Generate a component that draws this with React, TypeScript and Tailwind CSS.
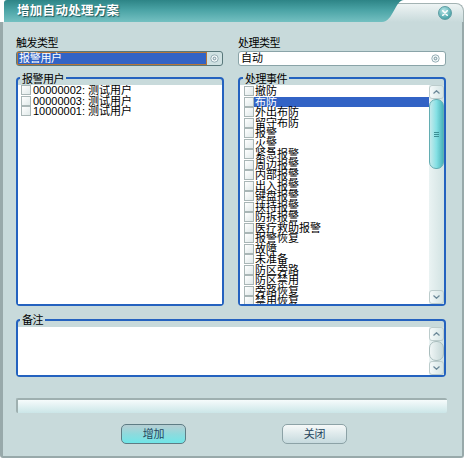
import React from "react";

const FONT = "font-['Liberation_Sans','Noto_Sans_CJK_SC',sans-serif]";

function Check() {
  return (
    <span className="block w-[10px] h-[10px] shrink-0 border border-[#a9b6b6] bg-gradient-to-br from-white to-[#e0e9e9]" />
  );
}

function Arrow({ up }: { up: boolean }) {
  return (
    <div className="h-[14px] shrink-0 flex items-center justify-center rounded-[3px] border border-[#bccccc] bg-gradient-to-r from-[#f5fafa] to-[#d4e4e4]">
      <svg width="7" height="4" viewBox="0 0 7 4">
        <path
          d={up ? "M0.5 3.5 L3.5 0.7 L6.5 3.5" : "M0.5 0.5 L3.5 3.3 L6.5 0.5"}
          fill="none"
          stroke="#6b8898"
          strokeWidth="1.2"
        />
      </svg>
    </div>
  );
}

function Spin() {
  return (
    <svg width="9" height="9" viewBox="0 0 9 9">
      <circle cx="4.5" cy="4.5" r="3.7" fill="#eef5f6" stroke="#8ea8b0" strokeWidth="0.9" />
      <circle cx="4.5" cy="4.5" r="1.3" fill="none" stroke="#5f7f8c" strokeWidth="0.8" />
    </svg>
  );
}

const users = ["00000002", "00000003", "10000001"];
const events = [
  "撤防",
  "布防",
  "外出布防",
  "留守布防",
  "报警",
  "火警",
  "紧急报警",
  "周边报警",
  "内部报警",
  "出入报警",
  "键盘报警",
  "挟持报警",
  "防拆报警",
  "医疗救助报警",
  "报警恢复",
  "故障",
  "未准备",
  "防区旁路",
  "防区禁用",
  "旁路恢复",
  "禁用恢复",
];

export default function App() {
  return (
    <div className={`w-[464px] h-[458px] bg-white flex flex-col ${FONT} text-[11px] text-black`}>
      {/* title bar */}
      <div className="h-[22px] flex shrink-0">
        <div className="w-[4px]" />
        <div className="flex-1 flex">
          <div className="relative z-[1] w-[400px] h-full flex items-center pl-[13px] rounded-tl-[3px] bg-[linear-gradient(to_bottom,#2d8486,#4aa3a5_45%,#74c0c1)] [clip-path:path('M0_0_H400_C391_0_389_22_378_22_H0_Z')]">
            <span className="text-white font-bold text-[12.5px] leading-none tracking-[0.3px] [text-shadow:1px_1px_1px_#1b5557]">
              增加自动处理方案
            </span>
          </div>
          <div className="flex-1 ml-[-26px] mt-[3px] flex items-center justify-end pr-[11px] rounded-tr-[8px] border-t border-r border-[#a3b3b3] bg-gradient-to-b from-[#eef4f4] to-[#c8dadb]">
            <div className="w-[14px] h-[14px] rounded-full border border-[#5c9ca2] bg-[radial-gradient(circle_at_40%_30%,#b8e6e8,#4aa4a9_75%)] flex items-center justify-center">
              <svg width="6" height="6" viewBox="0 0 6 6">
                <path d="M0.8 0.8 L5.2 5.2 M5.2 0.8 L0.8 5.2" stroke="#ffffff" strokeWidth="1.6" strokeLinecap="round" />
              </svg>
            </div>
          </div>
        </div>
      </div>

      {/* body */}
      <div className="flex-1 flex flex-col bg-[#c8dadb] border-l-[3px] border-r-[2px] border-b-[2px] border-[#98a9aa] rounded-b-[3px] pl-[13px] pr-[16px] pt-[14px]">
        <div className="flex gap-[14px]">
          {/* left column */}
          <div className="w-[208px] flex flex-col">
            <div className="h-[14px] leading-[14px] tracking-[-0.5px]">触发类型</div>
            <div className="mt-[1px] h-[15px] w-[207px] flex items-stretch border border-[#58777a] rounded-[3px] bg-[#cfe1e2]">
              <div className="flex-1 bg-[#3263c5] border border-[#b5763a] text-white leading-[11px] pl-[1px] tracking-[-0.3px]">
                报警用户
              </div>
              <div className="w-[15px] flex items-center justify-center">
                <Spin />
              </div>
            </div>
            <div className="relative mt-[11px] h-[229px] border-2 border-[#2462bf] rounded-[4px] pt-[6px] flex flex-col">
              <span className="absolute top-[-6px] left-[2px] px-[2px] h-[12px] leading-[12px] bg-[#c8dadb] tracking-[-0.5px]">
                报警用户
              </span>
              <div className="flex-1 bg-white flex flex-col overflow-hidden pl-[3px]">
                {users.map((u) => (
                  <div key={u} className="h-[10.5px] flex items-center gap-[2px] shrink-0 whitespace-nowrap">
                    <Check />
                    <span className="leading-[10.5px]">{u}: 测试用户</span>
                  </div>
                ))}
              </div>
            </div>
          </div>

          {/* right column */}
          <div className="w-[208px] flex flex-col">
            <div className="h-[14px] leading-[14px] tracking-[-0.5px]">处理类型</div>
            <div className="mt-[1px] h-[15px] flex items-center border border-[#8aa4a8] rounded-[3px] bg-white pl-[2px] pr-[5px]">
              <span className="flex-1 leading-[13px]">自动</span>
              <Spin />
            </div>
            <div className="relative mt-[11px] h-[229px] border-2 border-[#2462bf] rounded-[4px] pt-[6px] flex flex-col">
              <span className="absolute top-[-6px] left-[3px] px-[2px] h-[12px] leading-[12px] bg-[#c8dadb] tracking-[-0.5px]">
                处理事件
              </span>
              <div className="flex-1 bg-white flex overflow-hidden">
                <div className="flex-1 flex flex-col pl-[4px] pt-[1px] overflow-hidden">
                  {events.map((e, i) => (
                    <div key={e} className="h-[10.5px] flex items-center shrink-0 whitespace-nowrap">
                      <Check />
                      <span
                        className={
                          i === 1
                            ? "flex-1 h-full bg-[#3263c5] text-white pl-[1px] leading-[10.5px]"
                            : "flex-1 h-full pl-[1px] leading-[10.5px]"
                        }
                      >
                        {e}
                      </span>
                    </div>
                  ))}
                </div>
                <div className="w-[15px] flex flex-col bg-gradient-to-r from-[#eaf3f3] to-[#d2e3e3]">
                  <Arrow up={true} />
                  <div className="h-[70px] shrink-0 rounded-[7px] border border-[#63adb2] bg-gradient-to-r from-[#c4eaec] via-[#84e0e4] to-[#48b4ba] flex flex-col items-center justify-center gap-[1px]">
                    <span className="block w-[5px] h-[1px] bg-[#3d8f95]" />
                    <span className="block w-[5px] h-[1px] bg-[#3d8f95]" />
                    <span className="block w-[5px] h-[1px] bg-[#3d8f95]" />
                  </div>
                  <div className="flex-1" />
                  <Arrow up={false} />
                </div>
              </div>
            </div>
          </div>
        </div>

        {/* memo */}
        <div className="relative mt-[13px] h-[58px] border-2 border-[#2462bf] rounded-[4px] pt-[6px] flex flex-col">
          <span className="absolute top-[-7px] left-[2px] px-[2px] h-[12px] leading-[12px] bg-[#c8dadb] tracking-[-0.5px]">
            备注
          </span>
          <div className="flex-1 bg-white flex justify-end">
            <div className="w-[15px] flex flex-col bg-gradient-to-r from-[#eaf3f3] to-[#d2e3e3]">
              <Arrow up={true} />
              <div className="flex-1 rounded-[7px] border border-[#a9bdbd] bg-gradient-to-r from-[#f0f6f6] to-[#c6d8d8]" />
              <Arrow up={false} />
            </div>
          </div>
        </div>

        {/* progress */}
        <div className="mt-[21px] h-[15px] mr-[-1px] border-t-2 border-l-2 border-[#9fb0b0] rounded-[2px] bg-gradient-to-b from-[#f6fbfb] to-[#cbe6e8]" />

        {/* buttons */}
        <div className="mt-[11px] h-[20px] flex pl-[105px] gap-[96px]">
          <button className="w-[65px] h-[20px] rounded-[5px] border border-[#5e7c84] bg-gradient-to-b from-[#b6ced3] via-[#8edadd] to-[#6ee6e8] text-[#26465e] text-[11px] leading-[18px] tracking-[-0.3px]">
            增加
          </button>
          <button className="w-[65px] h-[20px] rounded-[5px] border border-[#8ca2a6] bg-gradient-to-b from-[#f6f9f9] to-[#c6dade] text-[#26465e] text-[11px] leading-[18px] tracking-[-0.3px]">
            关闭
          </button>
        </div>
      </div>
    </div>
  );
}
